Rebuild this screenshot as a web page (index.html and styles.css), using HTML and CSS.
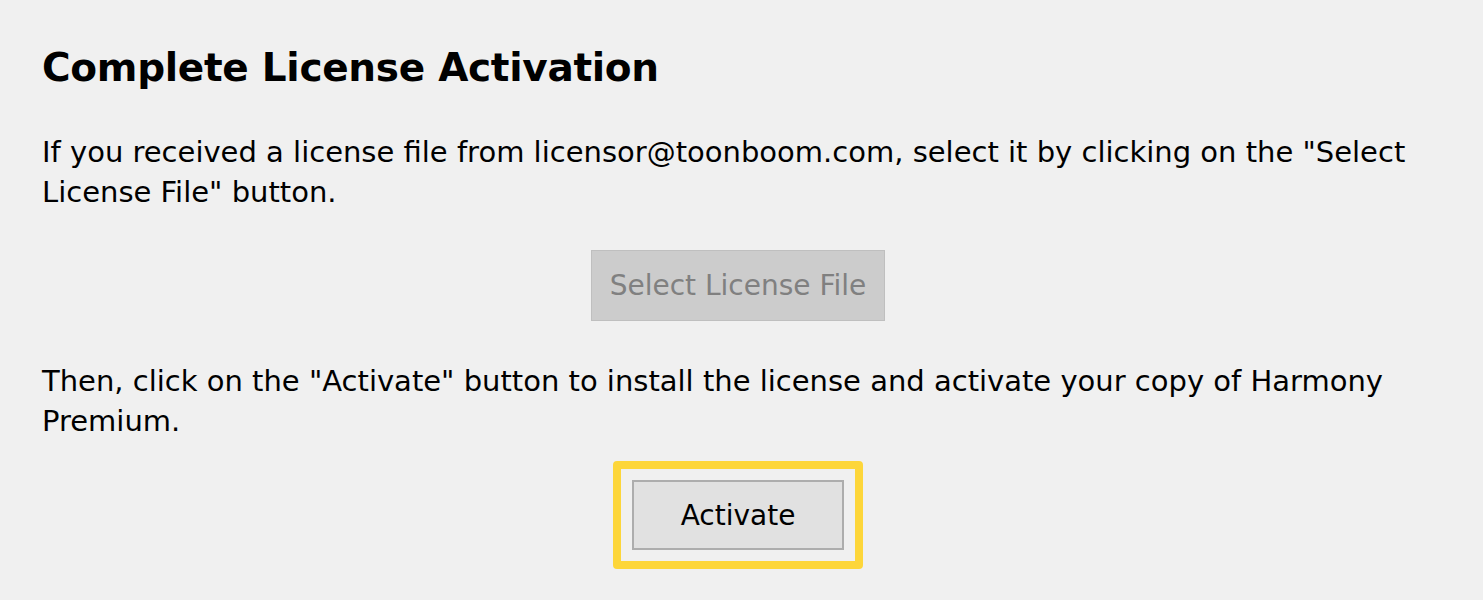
FILE: index.html
```html
<!DOCTYPE html>
<html>
<head>
<meta charset="utf-8">
<link rel="stylesheet" href="styles.css">
</head>
<body>
<div class="page">
  <h1 class="title">Complete License Activation</h1>
  <p class="text text-first">If you received a license file from licensor@toonboom.com, select it by clicking on the "Select License File" button.</p>
  <div class="btn-row">
    <button class="btn btn-disabled">Select License File</button>
  </div>
  <p class="text">Then, click on the "Activate" button to install the license and activate your copy of Harmony Premium.</p>
  <div class="btn-row">
    <div class="highlight">
      <button class="btn btn-primary">Activate</button>
    </div>
  </div>
</div>
</body>
</html>
```
FILE: styles.css
```css
html, body {
  margin: 0;
  padding: 0;
  background: #f0f0f0;
}
.page {
  width: 1392px;
  padding: 0 0 0 42px;
  font-family: "DejaVu Sans", sans-serif;
  color: #000;
  display: flex;
  flex-direction: column;
}
.title {
  margin: 46px 0 0 0;
  font-family: "DejaVu Sans", sans-serif;
  font-weight: bold;
  font-size: 39px;
  line-height: 44px;
  letter-spacing: -0.3px;
}
.text {
  margin: 40px 0 0 0;
  font-size: 29px;
  line-height: 40px;
}
.text-first {
  margin-top: 42px;
}
.btn-row {
  display: flex;
  justify-content: center;
}
.btn {
  font-family: "DejaVu Sans", sans-serif;
  font-size: 28px;
  padding: 0;
  margin: 0;
}
.btn-disabled {
  margin-top: 38px;
  width: 294px;
  height: 71px;
  background: #cccccc;
  border: 1px solid #bfbfbf;
  color: #808080;
}
.highlight {
  margin-top: 20px;
  border: 8px solid #fdd63a;
  border-radius: 4px;
  padding: 11px;
  background: #f0f0f0;
}
.btn-primary {
  display: block;
  width: 212px;
  height: 70px;
  background: #e1e1e1;
  border: 2px solid #adadad;
  color: #000;
}
```
